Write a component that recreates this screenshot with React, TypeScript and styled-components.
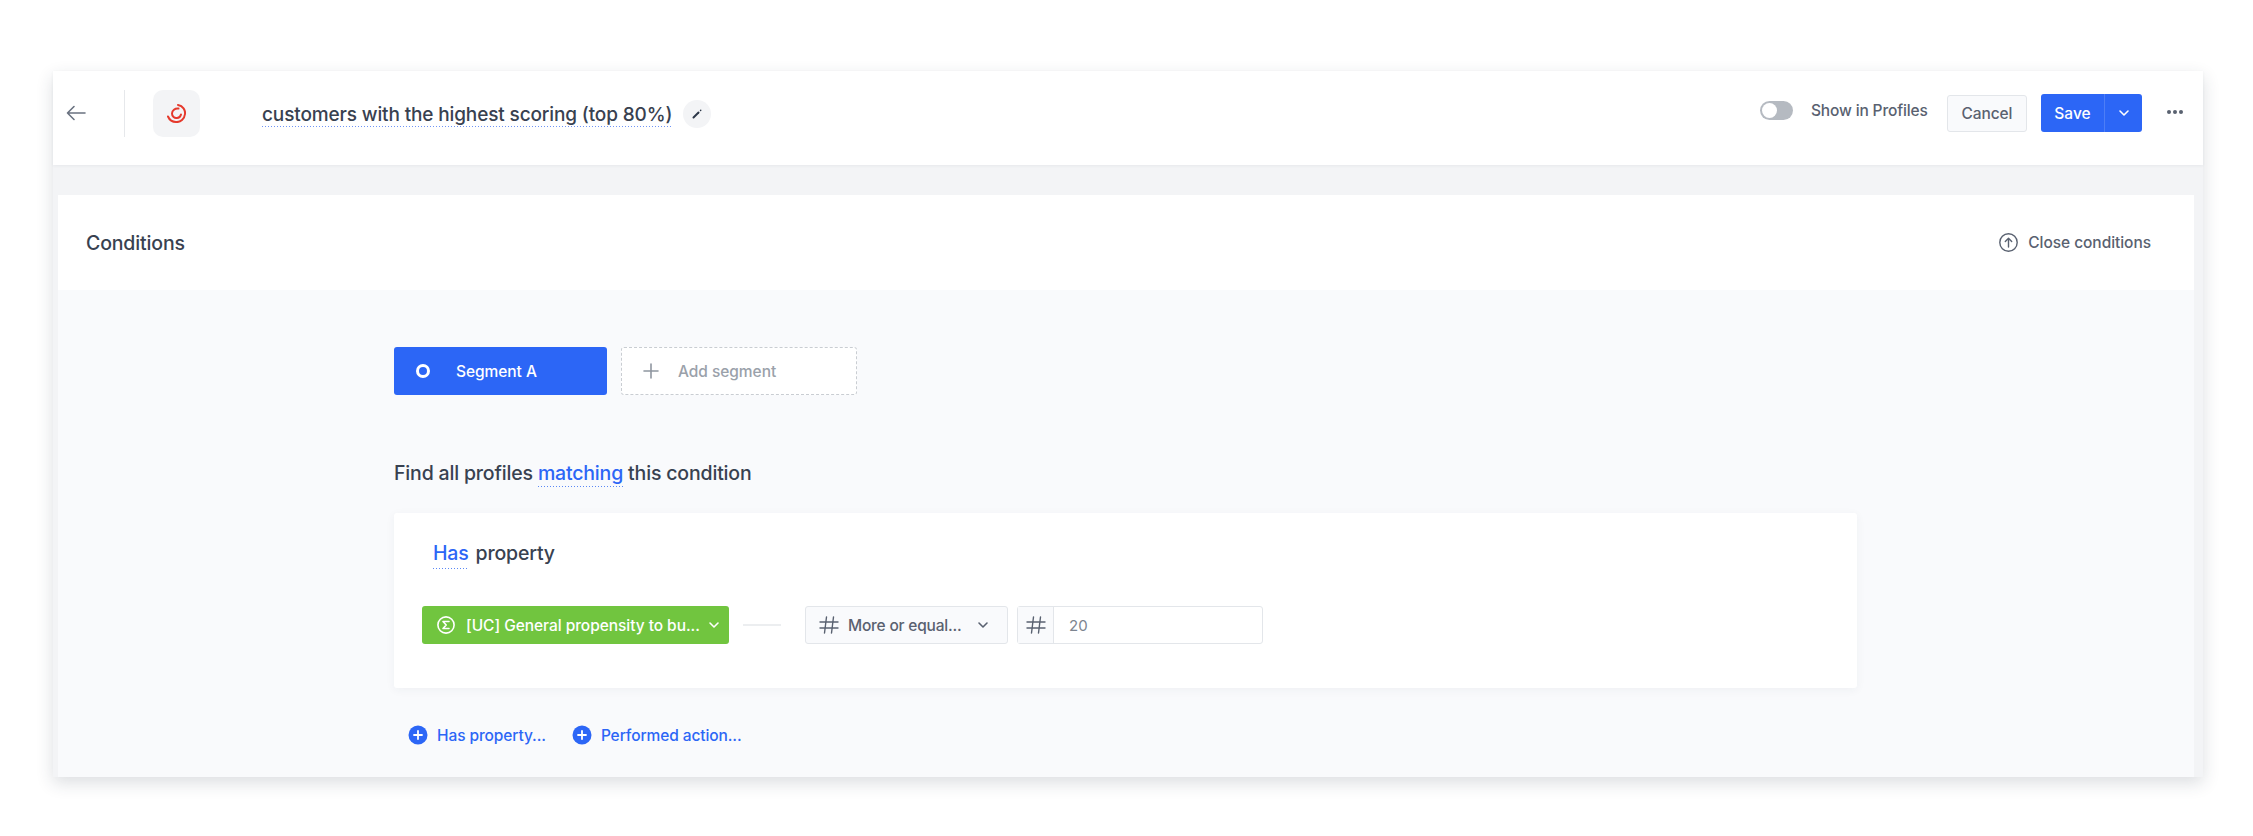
import React from "react";
import styled, { createGlobalStyle } from "styled-components";

const Global = createGlobalStyle`
  html, body { margin: 0; padding: 0; background: #fff; }
  body { font-family: Inter, "Liberation Sans", sans-serif; color: #2d3748; -webkit-font-smoothing: antialiased; }
  * { box-sizing: border-box; }
`;

const Page = styled.div`
  width: 2253px;
  height: 836px;
  padding: 71px 50px 59px 53px;
  overflow: hidden;
`;
const Shell = styled.div`
  height: 706px;
  display: flex;
  flex-direction: column;
  background: #f3f4f6;
  box-shadow: 0 6px 16px rgba(40, 50, 70, 0.16);
`;
const TopBar = styled.header`
  height: 94px;
  flex: none;
  display: flex;
  align-items: flex-start;
  background: #fff;
  box-shadow: 0 1px 3px rgba(40, 50, 70, 0.06);
`;
const Back = styled.div`
  width: 71px;
  height: 84px;
  padding-left: 13px;
  display: flex;
  align-items: center;
  color: #6a7280;
`;
const Divider = styled.div`
  width: 1px;
  height: 47px;
  margin-top: 19px;
  background: #e6e8eb;
`;
const LogoBox = styled.div`
  width: 47px;
  height: 47px;
  margin: 19px 0 0 28px;
  border-radius: 10px;
  background: #f3f4f6;
  display: flex;
  align-items: center;
  justify-content: center;
`;
const TitleWrap = styled.div`
  margin: 0 0 0 62px;
  height: 87px;
  display: flex;
  align-items: center;
`;
const Title = styled.span`
  font-size: 19px;
  font-weight: 500;
  line-height: 24px;
  color: #384150;
  letter-spacing: -0.13px;
  background: repeating-linear-gradient(90deg, #6f94f5 0 1px, transparent 1px 3px) left bottom / 100% 1px no-repeat;
`;
const EditButton = styled.span`
  width: 28px;
  height: 28px;
  margin: -2px 0 0 11px;
  border-radius: 50%;
  background: #f3f4f6;
  display: flex;
  align-items: center;
  justify-content: center;
`;
const Spacer = styled.div`
  flex: 1;
`;
const Actions = styled.div`
  display: flex;
  align-items: flex-start;
  padding: 23px 20px 0 0;
`;
const Toggle = styled.span`
  width: 33px;
  height: 19px;
  margin-top: 7px;
  border-radius: 10px;
  background: #b5bac1;
  padding: 2px;
  display: flex;
`;
const Knob = styled.span`
  width: 15px;
  height: 15px;
  border-radius: 50%;
  background: #fff;
`;
const ToggleLabel = styled.span`
  margin: 7px 0 0 18px;
  font-size: 15.5px;
  line-height: 19px;
  font-weight: 500;
  color: #596170;
  width: 136px;
  white-space: nowrap;
  letter-spacing: -0.15px;
`;
const Cancel = styled.span`
  width: 80px;
  height: 37px;
  margin-top: 1px;
  border: 1.5px solid #e3e6ea;
  border-radius: 3px;
  background: #f9fafc;
  font-size: 15.5px;
  font-weight: 500;
  color: #596170;
  display: flex;
  align-items: center;
  justify-content: center;
  letter-spacing: -0.1px;
`;
const SaveGroup = styled.div`
  width: 101px;
  height: 38px;
  margin-left: 14px;
  border-radius: 3px;
  background: #2c66f6;
  display: flex;
  color: #fff;
  font-size: 15.5px;
  font-weight: 500;
`;
const SaveLabel = styled.span`
  width: 64px;
  display: flex;
  align-items: center;
  justify-content: center;
  border-right: 1px solid #4d7ef6;
`;
const SaveArrow = styled.span`
  flex: 1;
  display: flex;
  align-items: center;
  justify-content: center;
`;
const More = styled.span`
  margin: 16px 0 0 25px;
  display: flex;
  gap: 2px;
`;
const Dot = styled.span`
  width: 4px;
  height: 4px;
  border-radius: 50%;
  background: #596170;
`;
const ShellBody = styled.div`
  flex: 1;
  padding: 30px 9px 0 5px;
  display: flex;
`;
const Card = styled.section`
  flex: 1;
  display: flex;
  flex-direction: column;
  background: #f9fafc;
`;
const CardHead = styled.div`
  height: 95px;
  flex: none;
  background: #fff;
  display: flex;
  align-items: center;
  justify-content: space-between;
  padding: 0 43px 0 28px;
`;
const CardTitle = styled.h2`
  margin: 0;
  font-size: 19.5px;
  font-weight: 500;
  color: #384150;
  letter-spacing: -0.15px;
`;
const CloseLink = styled.span`
  display: flex;
  align-items: center;
  gap: 10px;
  font-size: 15.5px;
  font-weight: 500;
  color: #596170;
  letter-spacing: -0.05px;
`;
const CardBody = styled.div`
  flex: 1;
  padding: 57px 0 0 336px;
`;
const Tabs = styled.div`
  display: flex;
  gap: 14px;
`;
const ActiveTab = styled.div`
  width: 213px;
  height: 48px;
  border-radius: 3px;
  background: #2c66f6;
  color: #fff;
  font-size: 15.5px;
  font-weight: 500;
  display: flex;
  align-items: center;
  padding-left: 22px;
  gap: 26px;
  letter-spacing: -0.05px;
`;
const Ring = styled.span`
  width: 14px;
  height: 14px;
  border-radius: 50%;
  border: 3px solid #fff;
`;
const AddTab = styled.div`
  width: 236px;
  height: 48px;
  border-radius: 3px;
  border: 1px dashed #c9cdd2;
  background: #fff;
  color: #9aa1aa;
  font-size: 15.5px;
  font-weight: 500;
  display: flex;
  align-items: center;
  padding-left: 21px;
  gap: 19px;
  letter-spacing: -0.05px;
`;
const Sentence = styled.p`
  margin: 64px 0 0;
  height: 28px;
  font-size: 19.5px;
  line-height: 28px;
  font-weight: 500;
  color: #384150;
  letter-spacing: -0.17px;
`;
const Keyword = styled.span`
  color: #2c66f6;
  padding-bottom: 2px;
  background: repeating-linear-gradient(90deg, #5b88f5 0 1px, transparent 1px 3px) left bottom / 100% 1px no-repeat;
`;
const RuleCard = styled.div`
  width: 1463px;
  height: 175px;
  margin-top: 26px;
  background: #fff;
  border-radius: 3px;
  box-shadow: 0 2px 10px rgba(40, 50, 70, 0.05);
  padding: 26px 0 0 28px;
`;
const RuleHeading = styled.div`
  font-size: 19.5px;
  line-height: 28px;
  font-weight: 500;
  color: #384150;
  padding-left: 11px;
  display: flex;
  gap: 7px;
  letter-spacing: -0.17px;
`;
const Controls = styled.div`
  display: flex;
  align-items: center;
  margin-top: 37px;
`;
const PropertySelect = styled.div`
  width: 307px;
  height: 38px;
  border-radius: 3px;
  background: #71c53f;
  color: #fff;
  display: flex;
  align-items: center;
  padding-left: 15px;
  font-size: 15.5px;
  font-weight: 500;
`;
const PropertyText = styled.span`
  margin-left: 11px;
  width: 241px;
  white-space: nowrap;
  letter-spacing: -0.05px;
`;
const Connector = styled.span`
  width: 38px;
  height: 2px;
  margin: 0 24px 0 14px;
  background: #eceef0;
`;
const OperatorSelect = styled.div`
  width: 203px;
  height: 38px;
  border: 1.5px solid #e3e6ea;
  border-radius: 3px;
  background: #f9fafc;
  color: #596170;
  display: flex;
  align-items: center;
  padding-left: 13px;
  font-size: 15.5px;
  font-weight: 500;
`;
const OperatorText = styled.span`
  margin-left: 9px;
  width: 128px;
  white-space: nowrap;
  letter-spacing: -0.2px;
`;
const NumberGroup = styled.div`
  width: 246px;
  height: 38px;
  margin-left: 9px;
  border: 1.5px solid #e3e6ea;
  border-radius: 3px;
  background: #fff;
  display: flex;
  align-items: center;
  font-size: 15px;
  color: #7d8590;
`;
const NumberPrefix = styled.span`
  width: 36px;
  height: 100%;
  flex: none;
  background: #f9fafc;
  border-right: 1.5px solid #e3e6ea;
  color: #596170;
  display: flex;
  align-items: center;
  justify-content: center;
`;
const NumberValue = styled.span`
  margin-left: 15px;
`;
const AddRow = styled.div`
  display: flex;
  margin: 37px 0 0 14px;
  gap: 26px;
`;
const AddLink = styled.span`
  display: flex;
  align-items: center;
  gap: 9px;
  font-size: 15.5px;
  font-weight: 500;
  color: #2c66f6;
  letter-spacing: -0.1px;
`;

const Chevron = ({ color = "currentColor", size = 14 }: { color?: string; size?: number }) => (
  <svg width={size} height={size} viewBox="0 0 14 14" fill="none">
    <path d="M3 5l4 4 4-4" stroke={color} strokeWidth="1.6" strokeLinecap="round" strokeLinejoin="round" />
  </svg>
);
const Hash = () => (
  <svg width="20" height="18" viewBox="0 0 20 18" fill="none" stroke="#596170" strokeWidth="1.4" strokeLinecap="round">
    <path d="M1 6h18M1 12h18M7.5 1L5.5 17M14.5 1l-2 16" />
  </svg>
);
const PlusCircle = () => (
  <svg width="20" height="20" viewBox="0 0 20 20">
    <circle cx="10" cy="10" r="9.5" fill="#2c66f6" />
    <path d="M10 6v8M6 10h8" stroke="#fff" strokeWidth="1.8" strokeLinecap="round" />
  </svg>
);

export default function App() {
  return (
    <Page>
      <Global />
      <Shell>
        <TopBar>
          <Back>
            <svg width="20" height="16" viewBox="0 0 20 16" fill="none" stroke="#6a7280" strokeWidth="1.6" strokeLinecap="round" strokeLinejoin="round">
              <path d="M19 8H1.5M8 1.5L1.5 8 8 14.5" />
            </svg>
          </Back>
          <Divider />
          <LogoBox>
            <svg width="19" height="19" viewBox="0 0 19 19" fill="none" stroke="#e5392c" strokeWidth="2" strokeLinecap="round">
              <path d="M11 1C16 2 18.500 6 18 10C17.500 15 13.500 18.500 9 18C5.500 18 2.500 16 1 12.500" />
              <path d="M11.500 4.500C8 4 5 6.500 5 9.500C5 12.500 7.500 14.500 10 14C12 14 13.500 12.500 14 10.500" />
            </svg>
          </LogoBox>
          <TitleWrap>
            <Title>customers with the highest scoring (top 80%)</Title>
            <EditButton>
              <svg width="12" height="12" viewBox="0 0 12 12" fill="none" stroke="#2d3748" strokeLinecap="round">
                <path d="M2.500 9.500L7.500 4.500" strokeWidth="2" />
                <path d="M9.500 2.500L9.800 2.200" strokeWidth="1.400" />
              </svg>
            </EditButton>
          </TitleWrap>
          <Spacer />
          <Actions>
            <Toggle><Knob /></Toggle>
            <ToggleLabel>Show in Profiles</ToggleLabel>
            <Cancel>Cancel</Cancel>
            <SaveGroup>
              <SaveLabel>Save</SaveLabel>
              <SaveArrow><Chevron /></SaveArrow>
            </SaveGroup>
            <More><Dot /><Dot /><Dot /></More>
          </Actions>
        </TopBar>
        <ShellBody>
          <Card>
            <CardHead>
              <CardTitle>Conditions</CardTitle>
              <CloseLink>
                <svg width="19" height="19" viewBox="0 0 19 19" fill="none" stroke="#596170" strokeWidth="1.4" strokeLinecap="round" strokeLinejoin="round">
                  <circle cx="9.500" cy="9.500" r="8.700" />
                  <path d="M9.500 14V5.500M6.300 8.500l3.200-3.200 3.200 3.200" />
                </svg>
                Close conditions
              </CloseLink>
            </CardHead>
            <CardBody>
              <Tabs>
                <ActiveTab><Ring />Segment A</ActiveTab>
                <AddTab>
                  <svg width="16" height="16" viewBox="0 0 16 16" stroke="#8f96a0" strokeWidth="1.6" strokeLinecap="round">
                    <path d="M8 1v14M1 8h14" />
                  </svg>
                  Add segment
                </AddTab>
              </Tabs>
              <Sentence>Find all profiles <Keyword>matching</Keyword> this condition</Sentence>
              <RuleCard>
                <RuleHeading><Keyword>Has</Keyword><span>property</span></RuleHeading>
                <Controls>
                  <PropertySelect>
                    <svg width="18" height="18" viewBox="0 0 18 18" fill="none" stroke="#fff" strokeWidth="1.6" strokeLinecap="round" strokeLinejoin="round">
                      <circle cx="9" cy="9" r="8.100" />
                      <path d="M12 5.500H6l3.200 3.500L6 12.500h6" />
                    </svg>
                    <PropertyText>[UC] General propensity to bu...</PropertyText>
                    <Chevron />
                  </PropertySelect>
                  <Connector />
                  <OperatorSelect>
                    <Hash />
                    <OperatorText>More or equal...</OperatorText>
                    <Chevron />
                  </OperatorSelect>
                  <NumberGroup>
                    <NumberPrefix><Hash /></NumberPrefix>
                    <NumberValue>20</NumberValue>
                  </NumberGroup>
                </Controls>
              </RuleCard>
              <AddRow>
                <AddLink><PlusCircle />Has property...</AddLink>
                <AddLink><PlusCircle />Performed action...</AddLink>
              </AddRow>
            </CardBody>
          </Card>
        </ShellBody>
      </Shell>
    </Page>
  );
}
